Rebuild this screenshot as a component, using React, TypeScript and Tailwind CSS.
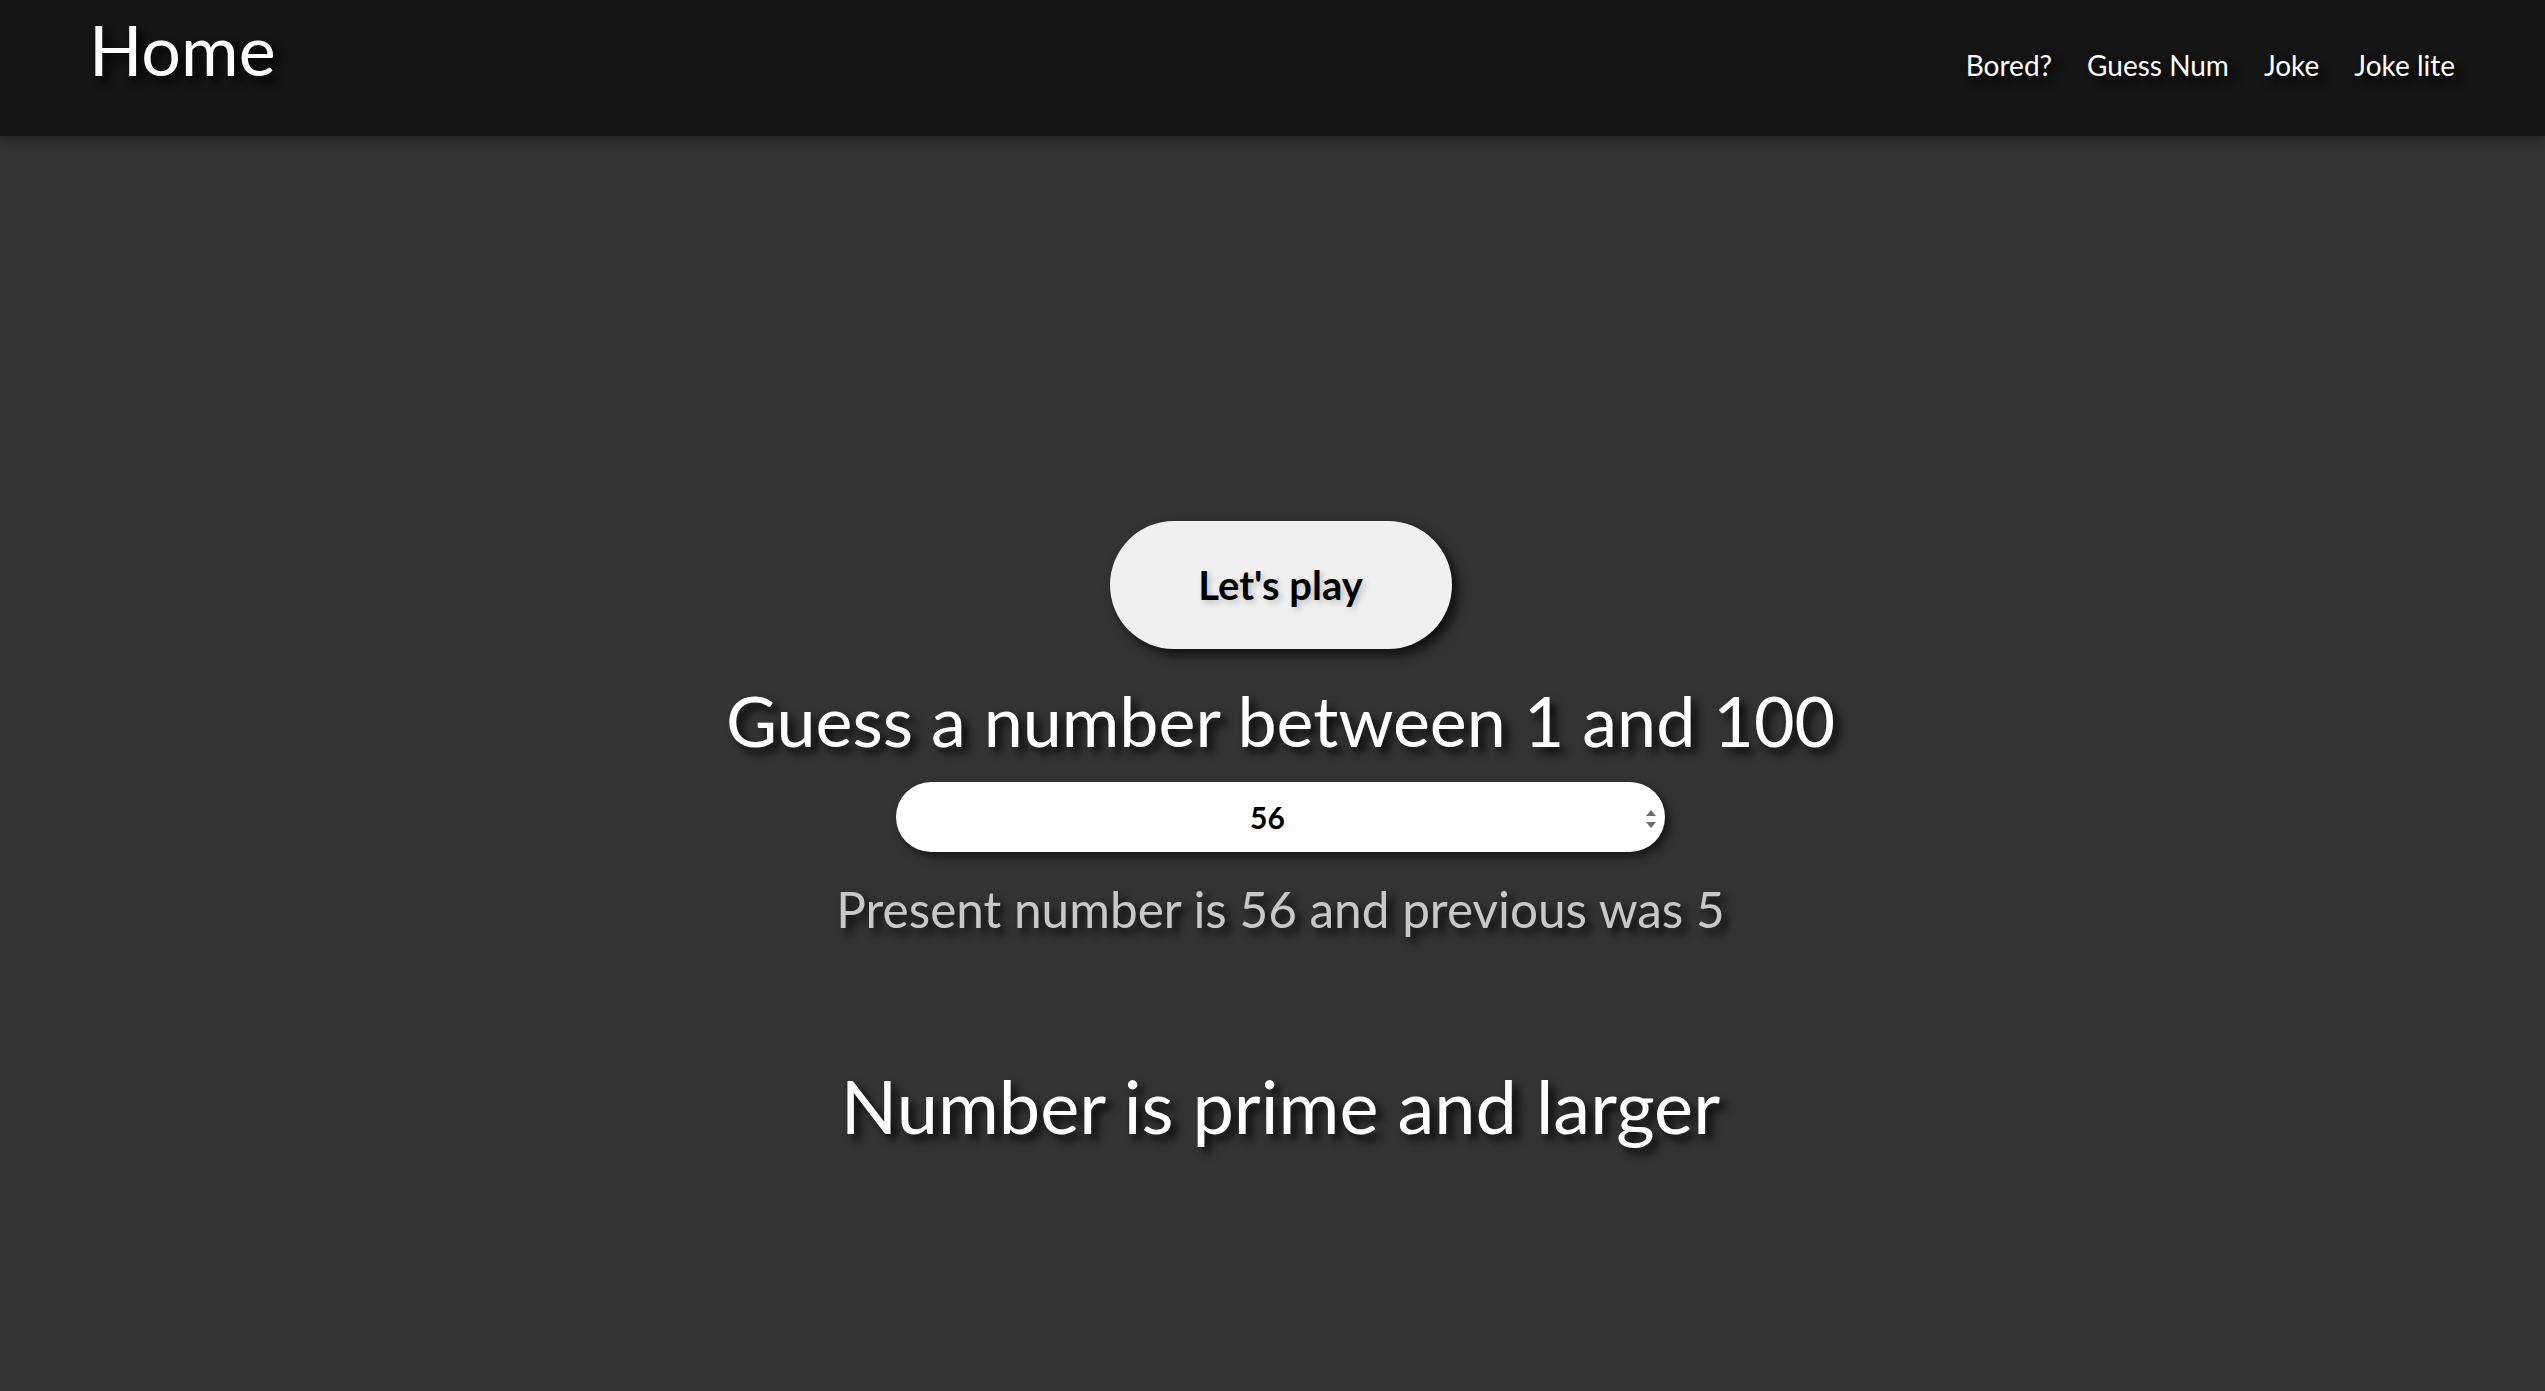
import { useState } from 'react';

const shadow = '[text-shadow:6px_6px_8px_rgba(0,0,0,0.85)]';

export default function App() {
  const [value, setValue] = useState('56');

  return (
    <div className="min-h-screen bg-[#333333] font-[Lato,sans-serif] text-white">
      {/* Header */}
      <header className="h-[136px] bg-[#141414] flex items-baseline justify-between pl-[89px] pr-[90px] pt-[14px] shadow-[0_4px_10px_rgba(0,0,0,0.35)]">
        <a className={`text-[70px] leading-none ${shadow}`}>Home</a>
        <nav className={`flex items-baseline gap-[35px] text-[28px] leading-none ${shadow}`}>
          <a>Bored?</a>
          <a>Guess Num</a>
          <a>Joke</a>
          <a>Joke lite</a>
        </nav>
      </header>

      {/* Game */}
      <main className="flex flex-col items-center pl-[16px] pt-[385px] pb-[200px]">
        <button className="w-[342px] h-[128px] rounded-full bg-[#f0f0f0] text-black text-[40px] font-bold leading-none shadow-[6px_6px_12px_rgba(0,0,0,0.7)] [text-shadow:3px_3px_6px_rgba(0,0,0,0.2)]">
          Let's play
        </button>

        <h1 className={`mt-[36px] text-[70px] leading-none ${shadow}`}>
          Guess a number between 1 and 100
        </h1>

        <div className="relative mt-[27px] w-[769px] h-[70px]">
          <input
            type="text"
            value={value}
            onChange={(e) => setValue(e.target.value)}
            className="w-full h-full rounded-full bg-white text-black text-center text-[30px] font-bold pr-[26px] outline-none shadow-[5px_5px_10px_rgba(0,0,0,0.55)]"
          />
          <svg
            className="absolute right-[8px] top-[27px] w-[12px] h-[20px]"
            viewBox="0 0 12 20"
          >
            <path d="M6 1 L11 7 L1 7 Z" fill="#6b6b6b" />
            <path d="M1 13 L11 13 L6 19 Z" fill="#6b6b6b" />
          </svg>
        </div>

        <p className={`mt-[33px] text-[49.5px] leading-none text-[#c8c8c8] ${shadow}`}>
          Present number is 56 and previous was 5
        </p>

        <h1 className={`mt-[134px] text-[74px] leading-none ${shadow}`}>
          Number is prime and larger
        </h1>
      </main>
    </div>
  );
}
